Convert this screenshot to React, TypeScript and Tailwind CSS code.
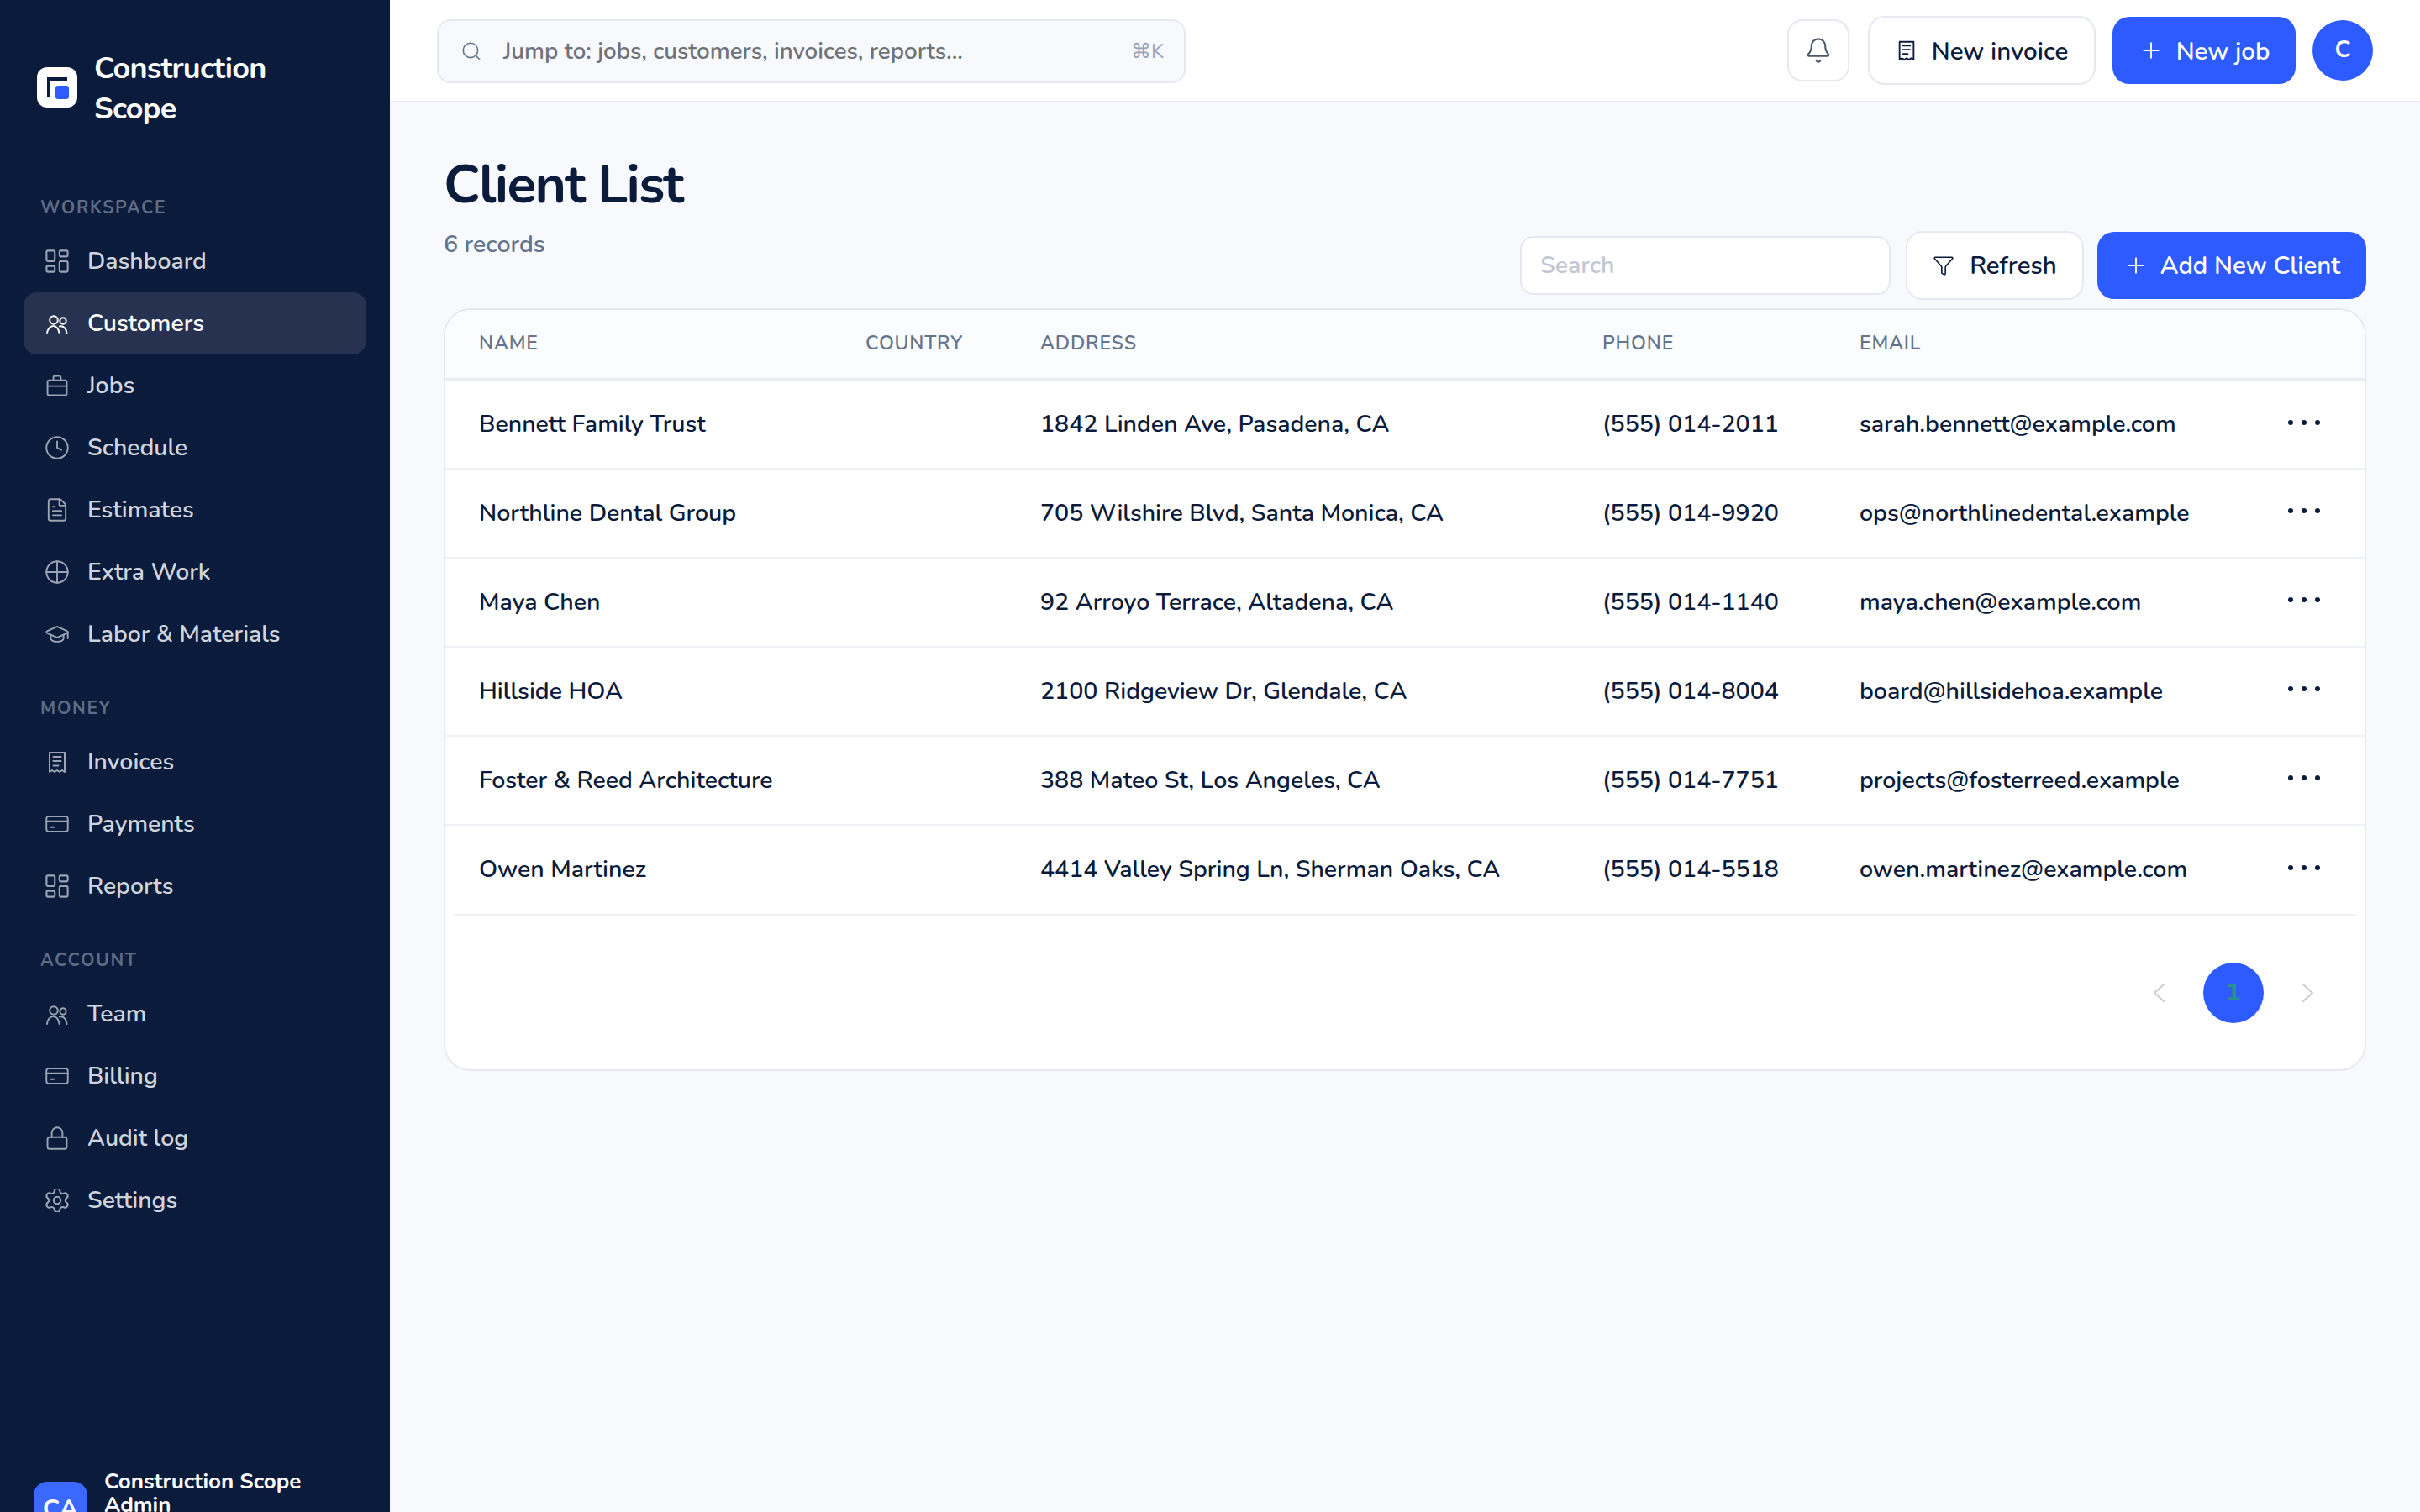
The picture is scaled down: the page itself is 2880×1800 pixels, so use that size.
import React from "react";
import { Bell, Clock, FileText, Funnel, GraduationCap, LayoutDashboard, Lock, Plus, Search, Settings } from "lucide-react";

type IconProps = { className?: string };

const UsersIcon = ({ className }: IconProps) => (
  <svg viewBox="0 0 28 28" fill="none" stroke="currentColor" strokeWidth={2} strokeLinecap="round" strokeLinejoin="round" className={className}>
    <circle cx="10" cy="10" r="4.8" />
    <circle cx="21" cy="11" r="3.7" />
    <path d="M2 26c.5-5.5 4-9 7.5-9s6.5 3.5 7 9" />
    <path d="M17 17.5c4.5-1 8 2.5 8.500 8.500" />
  </svg>
);
const CrossCircle = ({ className }: IconProps) => (
  <svg viewBox="1 1 22 22" fill="none" stroke="currentColor" strokeWidth={1.5} strokeLinecap="round" strokeLinejoin="round" className={className}>
    <circle cx="12" cy="12" r="10" />
    <path d="M12 2v20M2 12h20" />
  </svg>
);
const ReceiptIcon = ({ className }: IconProps) => (
  <svg viewBox="0 0 28 28" fill="none" stroke="currentColor" strokeWidth={2} strokeLinecap="round" strokeLinejoin="round" className={className}>
    <path d="M5 3h18v23l-3-2-3 2-3-2-3 2-3-2-3 2z" />
    <path d="M9.500 8h9M9.500 13h9M9.500 18.500h6" />
  </svg>
);
const CardIcon = ({ className }: IconProps) => (
  <svg viewBox="1 1 22 22" fill="none" stroke="currentColor" strokeWidth={1.5} strokeLinecap="round" strokeLinejoin="round" className={className}>
    <rect x="2" y="5" width="20" height="14" rx="2" />
    <path d="M2 9.500h20M6 15h3" />
  </svg>
);
const JobsIcon = ({ className }: IconProps) => (
  <svg viewBox="1 1 22 22" fill="none" stroke="currentColor" strokeWidth={1.5} strokeLinecap="round" strokeLinejoin="round" className={className}>
    <rect x="3" y="7" width="18" height="14" rx="1.500" />
    <path d="M8.500 7V4.500A1.500 1.500 0 0 1 10 3h4a1.500 1.500 0 0 1 1.500 1.500V7" />
    <path d="M3 12.500h18" />
  </svg>
);
const wide = (C: React.ComponentType<any>, vb: string) => ({ className }: IconProps) => <C viewBox={vb} className={className} strokeWidth={1.5} />;

const DashIcon = wide(LayoutDashboard, "2 2 20 20");
const ClockIcon = wide(Clock, "1 1 22 22");
const FileIcon = wide(FileText, "1 1 22 22");
const CapIcon = wide(GraduationCap, "1 1 22 22");
const LockIcon = wide(Lock, "1 1 22 22");
const GearIcon = wide(Settings, "2 2 20 20");

type Item = { label: string; icon: React.ComponentType<IconProps>; active?: boolean };
const sections: { title: string; items: Item[] }[] = [
  { title: "WORKSPACE", items: [
    { label: "Dashboard", icon: DashIcon },
    { label: "Customers", icon: UsersIcon, active: true },
    { label: "Jobs", icon: JobsIcon },
    { label: "Schedule", icon: ClockIcon },
    { label: "Estimates", icon: FileIcon },
    { label: "Extra Work", icon: CrossCircle },
    { label: "Labor & Materials", icon: CapIcon },
  ]},
  { title: "MONEY", items: [
    { label: "Invoices", icon: ReceiptIcon },
    { label: "Payments", icon: CardIcon },
    { label: "Reports", icon: DashIcon },
  ]},
  { title: "ACCOUNT", items: [
    { label: "Team", icon: UsersIcon },
    { label: "Billing", icon: CardIcon },
    { label: "Audit log", icon: LockIcon },
    { label: "Settings", icon: GearIcon },
  ]},
];

const rows = [
  ["Bennett Family Trust", "1842 Linden Ave, Pasadena, CA", "(555) 014-2011", "sarah.bennett@example.com"],
  ["Northline Dental Group", "705 Wilshire Blvd, Santa Monica, CA", "(555) 014-9920", "ops@northlinedental.example"],
  ["Maya Chen", "92 Arroyo Terrace, Altadena, CA", "(555) 014-1140", "maya.chen@example.com"],
  ["Hillside HOA", "2100 Ridgeview Dr, Glendale, CA", "(555) 014-8004", "board@hillsidehoa.example"],
  ["Foster & Reed Architecture", "388 Mateo St, Los Angeles, CA", "(555) 014-7751", "projects@fosterreed.example"],
  ["Owen Martinez", "4414 Valley Spring Ln, Sherman Oaks, CA", "(555) 014-5518", "owen.martinez@example.com"],
];

export default function App() {
  return (
    <div className="flex h-screen w-full overflow-hidden bg-[#f7f9fd] font-['Nunito','Nunito_Sans',Lato,sans-serif] text-[#0b1b3b]">
      <aside className="flex h-full w-[464px] shrink-0 flex-col overflow-hidden bg-[#0b1b3b] px-[28px]">
        <div className="flex items-center gap-[20px] px-[16px] pt-[56px]">
          <div className="relative h-[48px] w-[48px] shrink-0 rounded-[12px] bg-white">
            <div className="absolute left-[12px] top-[12px] h-[24px] w-[24px] border-l-[4px] border-t-[4px] border-[#0b1b3b]" />
            <div className="absolute left-[22px] top-[22px] h-[16px] w-[16px] rounded-[3px] bg-[#2e5bff]" />
          </div>
          <div className="mb-[-2px] mt-[2px] text-[36px] font-bold leading-[48px] tracking-[-0.75px] text-white">Construction<br />Scope</div>
        </div>
        <nav className="mt-[44px] flex flex-col">
          {sections.map((s) => (
            <div key={s.title} className="mt-[36px]">
              <div className="mb-[12px] pl-[20px] text-[21px] font-bold leading-[30px] tracking-[1.7px] text-[#5f6c85]">{s.title}</div>
              {s.items.map((it) => {
                const Icon = it.icon;
                return (
                  <div key={s.title + it.label} className={it.active ? "flex h-[74px] items-center gap-[22px] rounded-[16px] bg-[#26324f] pl-[26px] text-[28.4px] font-semibold text-white" : "flex h-[74px] items-center gap-[22px] rounded-[16px] pl-[26px] text-[28.4px] font-semibold text-[#cfd4dc]"}>
                    <Icon className={it.active ? "h-[28px] w-[28px] text-white" : "h-[28px] w-[28px] text-[#9ca4b3]"} />
                    <span>{it.label}</span>
                  </div>
                );
              })}
            </div>
          ))}
        </nav>
        <div className="mt-[284px] flex shrink-0 items-start gap-[20px] pl-[12px]">
          <div className="mt-[14px] flex h-[64px] w-[64px] shrink-0 items-center justify-center rounded-[16px] bg-[#3b68ff] text-[30px] font-bold text-white">CA</div>
          <div className="text-[26px] font-bold leading-[28px] text-white">Construction Scope<br />Admin</div>
        </div>
      </aside>

      <div className="flex min-w-0 flex-1 flex-col">
        <header className="flex h-[122px] shrink-0 items-center border-b-2 border-[#e5e9f2] bg-white px-[56px]">
          <div className="mt-[2px] flex h-[76px] w-[891px] items-center rounded-[16px] border-2 border-[#e5e9f2] bg-[#f7f9fd] pl-[26px] pr-[24px]">
            <Search className="h-[26px] w-[26px] text-[#64748b]" strokeWidth={1.5} />
            <span className="ml-[25px] mt-[1px] flex-1 text-[27.7px] font-semibold text-[#6f7277]">Jump to: jobs, customers, invoices, reports...</span>
            <span className="text-[24px] text-[#94a3c0]">⌘K</span>
          </div>
          <div className="ml-auto flex items-center gap-[20px]">
            <div className="mr-[2px] flex h-[74px] w-[74px] items-center justify-center rounded-[18px] border-2 border-[#e5e9f2] bg-white">
              <Bell viewBox="1 1 22 22" className="h-[30px] w-[30px] text-[#4b5568]" strokeWidth={1.5} />
            </div>
            <div className="flex h-[82px] w-[271px] items-center justify-center gap-[17px] rounded-[20px] border-2 border-[#e5e9f2] bg-white text-[29.5px] font-semibold">
              <ReceiptIcon className="h-[26px] w-[26px]" />
              <span className="mt-[2px]">New invoice</span>
            </div>
            <div className="flex h-[80px] w-[218px] items-center justify-center gap-[15px] rounded-[20px] bg-[#2e5bff] text-[29.5px] font-semibold text-white">
              <Plus className="h-[30px] w-[30px]" strokeWidth={1.5} />
              <span className="mt-[2px]">New job</span>
            </div>
            <div className="flex h-[72px] w-[72px] items-center justify-center rounded-full bg-[#2e5bff] pb-[2px] text-[28px] font-bold text-white">C</div>
          </div>
        </header>

        <main className="flex-1 px-[64px] pt-[58px]">
          <div className="flex justify-between pb-[10px]">
            <div className="h-[177px]">
              <h1 className="text-[64px] font-bold leading-[80px] tracking-[-1.6px]">Client List</h1>
              <div className="mt-[11px] text-[28.5px] font-semibold leading-[40px] text-[#64748b]">6 records</div>
            </div>
            <div className="flex h-[82px] items-center gap-[16px] self-end">
              <input placeholder="Search" className="mr-[2px] h-[70px] w-[441px] rounded-[16px] border-2 border-[#e5e9f2] bg-white px-[22px] pb-[2px] text-[28.5px] font-semibold outline-none placeholder:text-[#c1c7d0]" />
              <div className="flex h-[82px] w-[212px] items-center justify-center gap-[18px] rounded-[20px] border-2 border-[#e5e9f2] bg-white text-[29.5px] font-semibold">
                <Funnel className="h-[26px] w-[26px]" strokeWidth={1.5} />
                <span className="mt-[1px]">Refresh</span>
              </div>
              <div className="flex h-[80px] w-[320px] items-center justify-center gap-[14px] rounded-[20px] bg-[#2e5bff] text-[29.5px] font-semibold text-white">
                <Plus className="h-[30px] w-[30px]" strokeWidth={1.5} />
                <span className="mt-[1px]">Add New Client</span>
              </div>
            </div>
          </div>

          <div className="h-[908px] overflow-hidden rounded-[32px] border-2 border-[#e5e9f2] bg-white">
            <table className="w-full table-fixed border-collapse">
              <colgroup>
                <col className="w-[460px]" />
                <col className="w-[208px]" />
                <col className="w-[669px]" />
                <col className="w-[306px]" />
                <col />
              </colgroup>
              <thead>
                <tr className="h-[83px] border-b-[4px] border-[#e8edf4] bg-[#fbfcfe] text-left text-[23px] font-semibold tracking-[0.85px] text-[#64748b]">
                  <th className="pb-[1px] pl-[40px] font-semibold">NAME</th>
                  <th className="pb-[1px] pl-[40px] font-semibold">COUNTRY</th>
                  <th className="pb-[1px] pl-[40px] font-semibold">ADDRESS</th>
                  <th className="pb-[1px] pl-[40px] font-semibold">PHONE</th>
                  <th className="pb-[1px] pl-[40px] font-semibold">EMAIL</th>
                </tr>
              </thead>
              <tbody>
                {rows.map((r, i) => (
                  <tr key={r[0]} className={i < 5 ? "h-[106px] border-b-2 border-[#eef1f6] text-[28.5px] font-semibold" : "h-[106px] text-[28.5px] font-semibold"}>
                    <td className="pl-[40px]">{r[0]}</td>
                    <td className="pl-[40px]"></td>
                    <td className="pl-[40px]">{r[1]}</td>
                    <td className="pl-[40px]">{r[2]}</td>
                    <td className="pl-[40px]">
                      <div className="flex items-center justify-between pr-[53px]">
                        <span>{r[3]}</span>
                        <span className="mb-[6px] flex gap-[10px]">
                          <i className="h-[6px] w-[6px] rounded-full bg-[#0b1b3b]" />
                          <i className="h-[6px] w-[6px] rounded-full bg-[#0b1b3b]" />
                          <i className="h-[6px] w-[6px] rounded-full bg-[#0b1b3b]" />
                        </span>
                      </div>
                    </td>
                  </tr>
                ))}
              </tbody>
            </table>
            <div className="mx-[10px] h-[2px] bg-[#eef1f6]" />
            <div className="flex items-center justify-end pr-[60px] pt-[56px]">
              <svg viewBox="0 0 14 22" fill="none" stroke="#c9ced6" strokeWidth={2} strokeLinecap="round" strokeLinejoin="round" className="h-[22px] w-[14px]"><path d="M13 1 2 11l11 10" /></svg>
              <div className="mx-[46px] flex h-[72px] w-[72px] items-center justify-center rounded-full bg-[#2e5bff] font-['DejaVu_Sans',sans-serif] text-[26px] font-semibold text-[#2a8f8f]">1</div>
              <svg viewBox="0 0 14 22" fill="none" stroke="#c9ced6" strokeWidth={2} strokeLinecap="round" strokeLinejoin="round" className="h-[22px] w-[14px]"><path d="m1 1 11 10L1 21" /></svg>
            </div>
          </div>
        </main>
      </div>
    </div>
  );
}
